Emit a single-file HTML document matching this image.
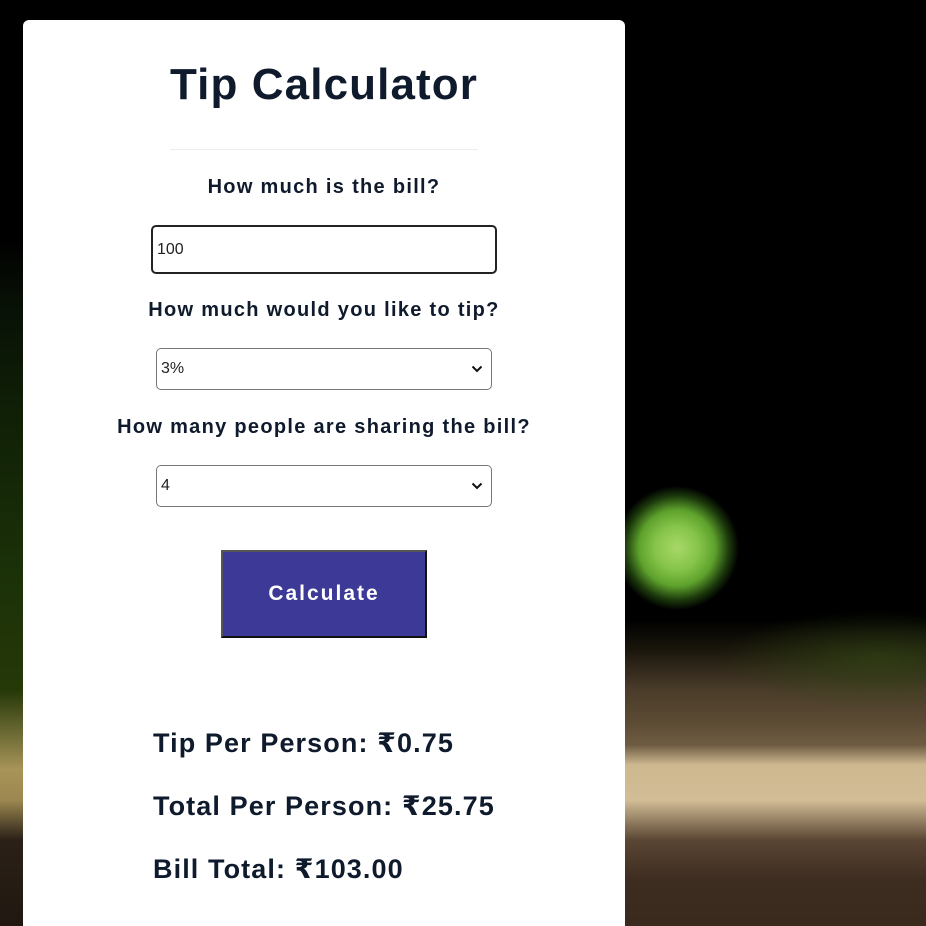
<!DOCTYPE html>
<html><head><meta charset="utf-8"><style>
html,body{margin:0;width:926px;height:926px;overflow:hidden}
body{position:relative;font-family:"Liberation Sans","DejaVu Sans",sans-serif;color:#0f1b2d;
background:
radial-gradient(circle at 677px 548px,#a8d868 0,#86c44a 22px,#5ea22c 38px,#1c3a0c 52px,rgba(0,0,0,0) 62px),
radial-gradient(ellipse 160px 50px at 880px 660px,rgba(50,70,20,.7),rgba(0,0,0,0)),
linear-gradient(to bottom,#000 0,#000 620px,#1a160c 650px,#4a3c2a 690px,#5b4a33 720px,#6e5c42 745px,#cdb890 765px,#d2bd96 800px,#5a4634 840px,#3d2c20 880px,#3a2a1e 926px);}
.l{position:absolute;left:0;top:0;width:23px;height:926px;background:linear-gradient(to bottom,#000 0,#000 240px,#081006 300px,#0f1e06 400px,#1a3008 560px,#253808 690px,#a89458 770px,#9c8850 800px,#2a2018 840px,#201810 926px)}
.card{position:absolute;left:23px;top:20px;width:602px;height:920px;background:#fff;border-radius:6px}
.t{position:absolute;left:0;width:602px;text-align:center;font-weight:bold}
h1{position:absolute;margin:0;left:0;width:602px;top:40px;text-align:center;font-size:44px;letter-spacing:1.1px}
.hr{position:absolute;left:147px;top:129px;width:308px;height:1px;background:#eee}
.lab{font-size:20px;letter-spacing:1.3px}
.inp{position:absolute;box-sizing:border-box;background:#fff;font-size:16px;padding-left:4px;color:#222}
.sel{border:1px solid #777;border-radius:5px;height:42px;line-height:40px}
.sel svg{position:absolute;right:8px;top:16px}
.btn{position:absolute;left:198px;top:530px;width:206px;height:88px;background:#3c3a96;border:2px solid #555;border-right-color:#111;border-bottom-color:#111;box-sizing:border-box;color:#fff;font-weight:bold;font-size:21px;text-align:center;line-height:84px;letter-spacing:2px}
.r{position:absolute;left:130px;font-weight:bold;font-size:27px;letter-spacing:1.1px}
</style></head><body>
<div class="l"></div>
<div class="card">
<h1>Tip Calculator</h1>
<div class="hr"></div>
<div class="t lab" style="top:156px">How much is the bill?</div>
<div class="inp" style="left:128px;top:205px;width:346px;height:49px;border:2px solid #222;border-radius:5px;line-height:45px">100</div>
<div class="t lab" style="top:279px">How much would you like to tip?</div>
<div class="inp sel" style="left:133px;top:328px;width:336px">3%<svg width="12" height="8" viewBox="0 0 12 8"><path d="M1.5 1.5L6 6l4.5-4.5" stroke="#111" stroke-width="2" fill="none"/></svg></div>
<div class="t lab" style="top:396px">How many people are sharing the bill?</div>
<div class="inp sel" style="left:133px;top:445px;width:336px">4<svg width="12" height="8" viewBox="0 0 12 8"><path d="M1.5 1.5L6 6l4.5-4.5" stroke="#111" stroke-width="2" fill="none"/></svg></div>
<div class="btn">Calculate</div>
<div class="r" style="top:708px">Tip Per Person: ₹0.75</div>
<div class="r" style="top:771px">Total Per Person: ₹25.75</div>
<div class="r" style="top:834px">Bill Total: ₹103.00</div>
</div>
</body></html>
